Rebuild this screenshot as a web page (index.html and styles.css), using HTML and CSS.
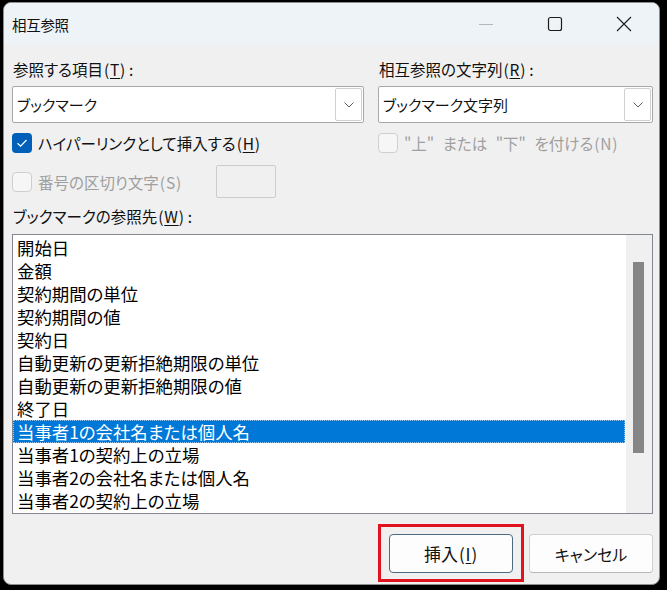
FILE: index.html
```html
<!DOCTYPE html>
<html lang="ja">
<head>
<meta charset="utf-8">
<title>相互参照</title>
<link rel="stylesheet" href="styles.css">
</head>
<body>
<div class="window">
  <div class="titlebar">
    <div class="title">相互参照</div>
    <div class="caption">
      <div class="cbtn"><svg width="16" height="16" viewBox="0 0 16 16"><line x1="1" y1="8.5" x2="15" y2="8.5" stroke="#b4b8bd" stroke-width="1"/></svg></div>
      <div class="cbtn"><svg width="16" height="16" viewBox="0 0 16 16"><rect x="1.5" y="1.5" width="13" height="13" rx="2" fill="none" stroke="#1b1b1b" stroke-width="1.2"/></svg></div>
      <div class="cbtn"><svg width="16" height="16" viewBox="0 0 16 16"><path d="M1 1L15 15M15 1L1 15" stroke="#1b1b1b" stroke-width="1.1" fill="none"/></svg></div>
    </div>
  </div>
  <div class="content">
    <div class="top">
      <div class="col">
        <div class="label">参照する項目<span class="key">(<u>T</u>)</span><span class="colon">:</span></div>
        <div class="combo"><span class="combo-text">ブックマーク</span><span class="drop"><svg width="10" height="6" viewBox="0 0 10 6"><path d="M0.5 0.5L5 5L9.5 0.5" fill="none" stroke="#5f5f5f" stroke-width="1"/></svg></span></div>
        <div class="check-row">
          <span class="box checked"><svg width="20" height="20" viewBox="0 0 20 20"><path d="M5.5 10.2L8.6 13.2L14.5 7" fill="none" stroke="#fff" stroke-width="1.2"/></svg></span>
          <span class="check-label">ハイパーリンクとして挿入する<span class="key">(<u>H</u>)</span></span>
        </div>
        <div class="check-row row2">
          <span class="box disabled"></span>
          <span class="check-label dim">番号の区切り文字<span class="key">(S)</span></span>
          <span class="textbox"></span>
        </div>
      </div>
      <div class="col">
        <div class="label">相互参照の文字列<span class="key">(<u>R</u>)</span><span class="colon">:</span></div>
        <div class="combo"><span class="combo-text">ブックマーク文字列</span><span class="drop"><svg width="10" height="6" viewBox="0 0 10 6"><path d="M0.5 0.5L5 5L9.5 0.5" fill="none" stroke="#5f5f5f" stroke-width="1"/></svg></span></div>
        <div class="check-row">
          <span class="box disabled"></span>
          <span class="check-label dim wide">"上" または "下" を付ける<span class="key">(N)</span></span>
        </div>
      </div>
    </div>
    <div class="label label3">ブックマークの参照先<span class="key">(<u>W</u>)</span><span class="colon">:</span></div>
    <div class="list">
      <div class="items">
        <div class="item">開始日</div>
        <div class="item">金額</div>
        <div class="item">契約期間の単位</div>
        <div class="item">契約期間の値</div>
        <div class="item">契約日</div>
        <div class="item">自動更新の更新拒絶期限の単位</div>
        <div class="item">自動更新の更新拒絶期限の値</div>
        <div class="item">終了日</div>
        <div class="item selected">当事者1の会社名または個人名</div>
        <div class="item">当事者1の契約上の立場</div>
        <div class="item">当事者2の会社名または個人名</div>
        <div class="item">当事者2の契約上の立場</div>
      </div>
      <div class="scrollbar"><div class="thumb"></div></div>
    </div>
    <div class="buttons">
      <div class="btn-wrap">
        <div class="btn default">挿入<span class="key">(<u>I</u>)</span></div>
        <div class="highlight"></div>
      </div>
      <div class="btn">キャンセル</div>
    </div>
  </div>
</div>
</body>
</html>
```

FILE: styles.css
```css
* { box-sizing: border-box; }
html, body { margin: 0; background: #000; }
body {
  padding: 2px 7px 5px 3px;
  font-family: "Noto Sans CJK JP", "Noto Sans", sans-serif;
  font-feature-settings: "palt";
  color: #111;
}
u { text-decoration-thickness: 1px; text-underline-offset: 2px; }
.key { letter-spacing: 0.8px; margin-left: 1px; }
.colon { margin-left: 3px; }
.window {
  width: 657px;
  height: 583px;
  background: #f0f0f0;
  border: 1px solid #8e8e8e;
  border-radius: 8px;
  overflow: hidden;
  display: flex;
  flex-direction: column;
}
.titlebar {
  height: 42px;
  background: #eef3f8;
  display: flex;
  align-items: center;
  padding-left: 8px;
  flex: none;
}
.title { font-size: 14.5px; letter-spacing: -0.3px; }
.caption { margin-left: auto; display: flex; height: 100%; margin-right: 1px; }
.cbtn { width: 69px; display: flex; align-items: center; justify-content: center; }
.content {
  padding: 14px 6px 0 8px;
  display: flex;
  flex-direction: column;
}
.top {
  display: grid;
  grid-template-columns: 352px 275px;
  column-gap: 14px;
}
.col { display: flex; flex-direction: column; }
.label { font-size: 15.5px; line-height: 20px; height: 20px; padding-left: 1px; }
.combo {
  margin-top: 7px;
  height: 37px;
  background: #fff;
  border: 1px solid #a8a8a8;
  border-radius: 2px;
  display: flex;
  align-items: center;
  padding: 1px 1px 1px 4px;
}
.combo-text { font-size: 15px; flex: 1; }
.drop {
  width: 27px;
  height: 33px;
  border: 1px solid #d0d0d0;
  border-radius: 2px;
  display: flex;
  align-items: center;
  justify-content: center;
  background: #fff;
}
.check-row {
  margin-top: 10px;
  height: 20px;
  display: flex;
  align-items: center;
  gap: 6px;
}
.check-row.row2 { margin-top: 12px; height: 33px; }
.box {
  width: 20px;
  height: 20px;
  border-radius: 4px;
  flex: none;
}
.box.checked { background: #005fb8; }
.box.checked svg { display: block; }
.box.disabled { border: 1px solid #cfcfcf; background: #f6f6f6; }
.check-label { font-size: 15.5px; line-height: 20px; }
.check-label.dim { color: #9f9f9f; }
.check-label.wide { word-spacing: 5px; }
.textbox {
  width: 60px;
  height: 33px;
  margin-left: 28px;
  border: 1px solid #cccccc;
  background: #f0f0f0;
  border-radius: 2px;
}
.label3 { margin-top: 8px; }
.list {
  margin-top: 8px;
  height: 280px;
  background: #fff;
  border: 1px solid #828790;
  display: flex;
}
.items { flex: 1; padding-top: 1px; }
.item {
  height: 23px;
  line-height: 23px;
  font-size: 17.4px;
  padding-left: 4px;
  color: #000;
  white-space: nowrap;
}
.item.selected {
  background: #0078d7;
  color: #fff;
  outline: 1px dotted #9cc8ef;
  outline-offset: -1px;
  margin-right: 1px;
}
.scrollbar {
  width: 26px;
  background: #f0f0f0;
  padding-top: 27px;
  flex: none;
}
.thumb {
  width: 11px;
  height: 191px;
  margin-left: 7px;
  background: #868686;
}
.buttons {
  margin-top: 20px;
  display: flex;
  justify-content: flex-end;
  gap: 16px;
}
.btn-wrap { position: relative; }
.btn {
  width: 124px;
  height: 39px;
  border: 1px solid #d0d0d0;
  border-bottom-color: #b8b8b8;
  border-radius: 4px;
  background: #fdfdfd;
  display: flex;
  align-items: center;
  justify-content: center;
  font-size: 16px;
}
.btn.default { border: 1px solid #4c6a82; font-size: 17px; }
.highlight {
  position: absolute;
  left: -11px;
  right: -11px;
  top: -10px;
  bottom: -9px;
  border: 3px solid #e0131f;
}
```
